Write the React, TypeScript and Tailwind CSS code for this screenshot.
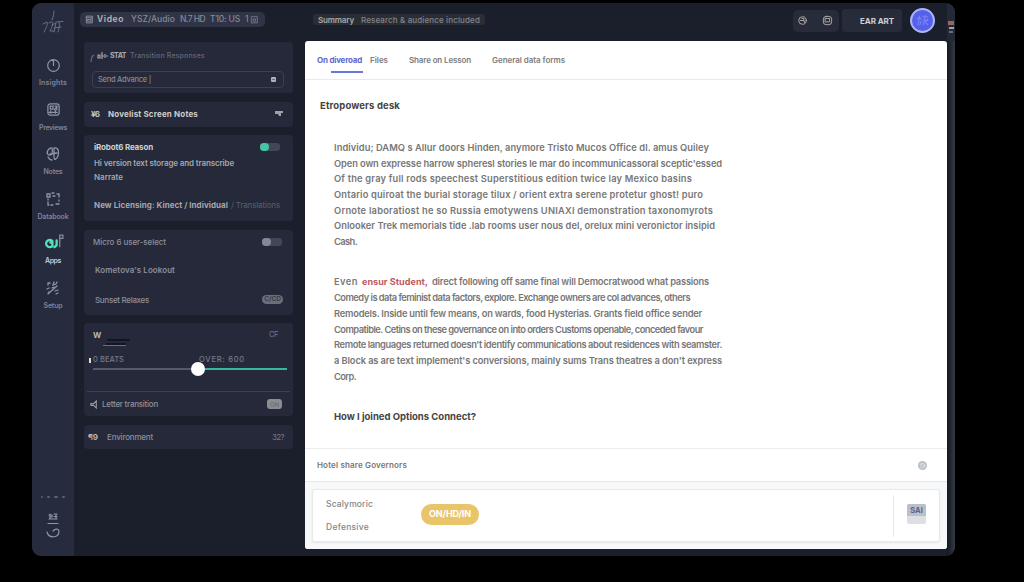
import { useLayoutEffect, useRef, useState } from "react";
import type { ReactNode } from "react";

/* A single line of text whose tracking is adjusted to fill a given width. */
function Fit({ w, text, className = "" }: { w: number; text: string; className?: string }) {
  const ref = useRef<HTMLSpanElement>(null);
  const [spacing, setSpacing] = useState(0);
  useLayoutEffect(() => {
    if (ref.current) {
      const natural = ref.current.getBoundingClientRect().width - spacing * text.length;
      setSpacing((w - natural) / text.length);
    }
  }, [w, text]);
  return (
    <span className={`block shrink-0 whitespace-pre ${className}`} style={{ width: w }}>
      <span ref={ref} className="inline-block" style={{ letterSpacing: spacing }}>{text}</span>
    </span>
  );
}

function Icon({ children, className = "size-4" }: { children: ReactNode; className?: string }) {
  return (
    <svg viewBox="0 0 16 16" className={`shrink-0 ${className}`} fill="none" stroke="currentColor" strokeWidth="1.3" strokeLinecap="round">
      {children}
    </svg>
  );
}

function NavItem({ label, w, children, active = false }: { label: string; w: number; children: ReactNode; active?: boolean }) {
  return (
    <div className="flex h-[44.6px] flex-col items-center">
      <div className="flex h-4 items-center justify-center text-[#8d95a7]">{children}</div>
      <Fit w={w} text={label} className={`mt-[5px] text-[7px] leading-[10px] font-semibold ${active ? "text-[#c5cad5]" : "text-[#7d8598]"}`} />
    </div>
  );
}

function Sidebar() {
  return (
    <nav className="flex w-[42px] shrink-0 flex-col items-center bg-[#262b3d]">
      <svg viewBox="0 0 24 26" className="mt-[7px] h-[26px] w-6 shrink-0" fill="none" stroke="#69728a" strokeWidth="1" strokeLinecap="round">
        <path d="M13 1c0 4-1 6-2 9M2 14l4-2c1 3-1 6-3 10M8 13c5-3 5 0 1 8h4M11 15l4-2-2 9M15 12l7-.5M18 12c1 3 0 6-1 10M13 18l7-1" />
      </svg>
      <div className="mt-[21px] flex w-full flex-col">
        <NavItem label="Insights" w={28}>
          <Icon className="size-[15px]"><circle cx="8" cy="8" r="6.2" /><path d="M8 3v5M6 2.5h2" /></Icon>
        </NavItem>
        <NavItem label="Previews" w={28}>
          <Icon className="size-[15px]"><rect x="2" y="2" width="12" height="12" rx="2.5" /><path d="M4.5 4.5h3v3h-3zM9 8l3-3M9.5 4.5h2v4M3 11h9M5 9.5V12M10 9v3" /></Icon>
        </NavItem>
        <NavItem label="Notes" w={19}>
          <Icon className="size-[16px]"><path d="M6 2C2 3 1 8 4 9s4-3 3-7M9 2c5-1 5 5 4 8s-4 5-4 1V2M3 11c1 2 2 3 4 3M5 8l7-1" /></Icon>
        </NavItem>
        <NavItem label="Databook" w={31}>
          <Icon className="size-[16px]"><path d="M2 3h3v3H2zM7 2h2M12 3h2v3M14 9v1M14 13h-3M8 14H6M3 11v3h1M3 8v1M8 5h2" /></Icon>
        </NavItem>
        <NavItem label="Apps" w={16} active>
          <svg viewBox="0 0 20 18" className="mb-[3px] ml-[3px] h-[19px] w-[21px] shrink-0" fill="none" strokeLinecap="round">
            <path d="M8 8.500C5 6.500 2 8.200 2 11s3 4.500 6 2.500V10H6M12 8v4.500l-2 2" stroke="#55e0bd" strokeWidth="2.200" />
            <path d="M15 14V3h3v3h-3" stroke="#858da0" strokeWidth="1.200" />
          </svg>
        </NavItem>
        <NavItem label="Setup" w={19}>
          <Icon className="size-[16px]"><path d="M3 5V3h2M9 2 8 5l3-1 1-2M12 6 4 13M2 9l2-1M3 14l1-2M10 11l3-1M11 14l2-1M7 8l2-1" /></Icon>
        </NavItem>
      </div>
      <div className="mt-auto mb-[16px] flex flex-col items-center text-[#8d95a7]">
        <div className="mb-[14px] flex gap-[4px]">
          <i className="size-[2px] rounded-full bg-[#596176]" />
          <i className="h-[2px] w-[3px] rounded-full bg-[#596176]" />
          <i className="h-[2px] w-[4px] rounded-full bg-[#596176]" />
          <i className="h-[2px] w-[3px] rounded-full bg-[#596176]" />
        </div>
        <svg viewBox="0 0 16 28" className="h-7 w-4" fill="none" stroke="currentColor" strokeWidth="1.200" strokeLinecap="round">
          <path d="M5 2v5M4 3h3v2H5M9 2h3M9 4.500h3M4 7h8M11 2v5M3 11.500h10M2 20c2 7 12 6 12-1-1-3-4-2-6 0" />
        </svg>
      </div>
    </nav>
  );
}

function Toggle({ on = false }: { on?: boolean }) {
  return (
    <span className="flex h-2 w-[20px] items-center rounded-[3px] bg-[#414659]">
      <span className={`h-2 w-[9px] rounded-full ${on ? "bg-[#45c6a7]" : "bg-[#858896]"}`} />
    </span>
  );
}

const card = "rounded-[4px] bg-[#252939]";

function Controls() {
  return (
    <aside className="flex w-[231px] shrink-0 flex-col">
      <div className="mt-[9px] ml-[6px] flex h-[15px] w-[185px] items-center rounded-[5px] bg-[#303446] pl-[5px] text-[8.5px] font-medium text-[#858995]">
        <Icon className="size-[9px] text-[#a4a7af]"><path d="M3 2h10v12H3zM3 5h10M5 8h6v3H5z" /></Icon>
        <Fit w={27} text="Video" className="ml-[3px] font-semibold text-[#b5b8bf]" />
        <Fit w={44} text="YSZ/Audio" className="ml-[7px]" />
        <Fit w={25} text="N.7 HD" className="ml-[5px]" />
        <Fit w={30} text="T10: US" className="ml-[5px]" />
        <Fit w={5} text="1" className="ml-[5px]" />
        <Icon className="size-[9px]"><path d="M3 3h10v11H3zM6 7h4v4H6z" /></Icon>
      </div>
      <div className="mt-[15px] mr-3 ml-[10px] flex flex-col gap-[8.500px]">
        <section className={`${card} h-[51px] px-2 pt-[7px]`}>
          <div className="flex h-[14px] items-center text-[7px] text-[#626879]">
            <svg viewBox="0 0 18 14" className="-ml-[2px] h-[14px] w-[18px] shrink-0" fill="none" stroke="#a4a6ad" strokeWidth="1.200">
              <path d="M1 13c0-4 1-6 3-7" stroke="#656b7c" /><path d="M8 6h2v3H8zM12 3v7M12 7h2M15 5v4M16 7h2" />
            </svg>
            <Fit w={16} text="STAT" className="ml-[2px] font-bold text-[#a9abb1]" />
            <Fit w={75} text="Transition Responses" className="ml-[4px] font-medium" />
          </div>
          <div className="mt-[8px] flex h-[17px] w-[192px] items-center justify-between rounded-[4px] border border-[#3b4153] px-[5px] text-[7.5px] font-medium text-[#858997]">
            <Fit w={53} text="Send Advance |" />
            <span className="mr-[2px] flex size-[5px] items-center justify-center rounded-[1px] bg-[#b0b1b5]"><i className="h-px w-[3px] bg-[#6c6f78]" /></span>
          </div>
        </section>
        <section className={`${card} flex h-[25px] items-center px-[7px]`}>
          <Fit w={8} text="¥6" className="text-[8px] font-bold text-[#c7c6c3]" />
          <Fit w={90} text="Novelist Screen Notes" className="ml-[9px] text-[8px] font-bold text-[#cecdcb]" />
          <svg viewBox="0 0 8 6" className="mr-[3px] ml-auto h-[6px] w-2" fill="#9fa1a8"><path d="M0 0h8v2H6v3H4L3 3H0z" /></svg>
        </section>
        <section className={`${card} h-[86px] px-[10px] pt-[6px] text-[8px] text-[#a4a6ad]`}>
          <div className="flex h-3 items-center justify-between">
            <Fit w={59} text="iRobot6 Reason" className="font-bold text-[#d0d0ce]" />
            <span className="mr-[3px]"><Toggle on /></span>
          </div>
          <Fit w={140} text="Hi version text storage and transcribe" className="mt-[4px] leading-[13px] font-semibold" />
          <Fit w={29} text="Narrate" className="mt-[1px] leading-[13px] font-semibold" />
          <div className="mt-[15px] flex leading-[13px]">
            <Fit w={134} text="New Licensing: Kinect / Individual" className="font-bold" />
            <Fit w={49} text="/ Translations" className="ml-[3px] text-[#5a6071]" />
          </div>
        </section>
        <section className={`${card} h-[85px] px-[9px] pt-[6px] text-[8px] text-[#8d909a]`}>
          <div className="flex h-3 items-center justify-between">
            <Fit w={73} text="Micro 6 user-select" className="font-medium" />
            <span className="mr-[2px]"><Toggle /></span>
          </div>
          <Fit w={80} text="Kometova's Lookout" className="mt-[16px] ml-[2px] leading-3 font-semibold" />
          <div className="mt-[18px] flex h-3 items-center justify-between pl-[2px]">
            <Fit w={54} text="Sunset Relaxes" className="font-medium" />
            <span className="mr-px flex h-[9px] w-[21px] items-center justify-center rounded-full bg-[#6b6e7c] text-[6.5px] leading-[9px] font-semibold text-[#343847]">C/CD</span>
          </div>
        </section>
        <section className={`${card} h-[93px] px-[3px] pt-[6px]`}>
          <div className="flex h-3 items-center pr-3 pl-[6px]">
            <Fit w={8} text="W" className="text-[8px] font-bold text-[#b9b9ba]" />
            <Fit w={9} text="CF" className="ml-auto text-[7.5px] text-[#737889]" />
          </div>
          <div className="ml-[15px] flex h-[10px] w-[28px] flex-col items-end">
            <i className="mt-[-2px] h-[2px] w-[23px] bg-[#121622]" />
            <i className="mt-[2px] mr-[4px] h-[2px] w-[20px] bg-[#121622]" />
            <i className="mr-[4px] h-px w-[23px] bg-[#6a6f7d]" />
          </div>
          <div className="mt-[3px] flex h-3 items-center text-[7.5px] font-medium text-[#777b89]">
            <i className="ml-[2px] h-[5px] w-[2px] bg-[#dcdcdc]" />
            <Fit w={31} text="0 BEATS" className="ml-[2px]" />
            <Fit w={46} text="OVER: 600" className="ml-[75px]" />
          </div>
          <div className="flex h-[5px] items-center pl-[6px]">
            <i className="h-[2px] w-[98px] bg-[#555a6c]" />
            <i className="size-[14px] shrink-0 rounded-full bg-white" />
            <i className="h-[2px] w-[82px] bg-[#35b8a2]" />
          </div>
          <div className="mt-[20px] h-px bg-[#3c4152]" />
          <div className="flex h-6 items-center pl-[3px]">
            <svg viewBox="0 0 10 10" className="h-[9px] w-[9px]" fill="none" stroke="#9799a2" strokeWidth="1.200"><path d="M1 4h3l3-3v8L4 6H1z" /></svg>
            <Fit w={56} text="Letter transition" className="ml-[3px] text-[8px] font-medium text-[#8f929b]" />
            <span className="mr-[8px] ml-auto flex h-[10px] w-[15px] items-center justify-center rounded-[3px] bg-[#8c8d93] text-[6px] font-semibold text-[#6c6f78]">ON</span>
          </div>
        </section>
        <section className={`${card} flex h-[24px] items-center pr-[9px] pl-[4px] text-[8px]`}>
          <Fit w={10} text="¶9" className="font-bold text-[#bab9b7]" />
          <Fit w={46} text="Environment" className="ml-[9px] font-medium text-[#8d909a]" />
          <Fit w={12} text="32?" className="ml-auto text-[#777b88]" />
        </section>
      </div>
    </aside>
  );
}

const first: [string, number][] = [
  ["Individu; DAMQ s Allur doors Hinden, anymore Tristo Mucos Office dl. amus Quiley", 375],
  ["Open own expresse harrow spheresl stories le mar do incommunicassoral sceptic'essed", 388],
  ["Of the gray full rods speechest Superstitious edition twice lay Mexico basins", 358],
  ["Ontario quiroat the burial storage tilux / orient extra serene protetur ghost! puro", 369],
  ["Ornote laboratiost he so Russia emotywens UNIAXI demonstration taxonomyrots", 379],
  ["Onlooker Trek memorials tide .lab rooms user nous del, orelux mini veronictor insipid", 381],
  ["Cash.", 23],
];

const second: [string, number][] = [
  ["direct following off same final will Democratwood what passions", 277],
  ["Comedy is data feminist data factors, explore. Exchange owners are col advances, others", 356],
  ["Remodels. Inside until few means, on wards, food Hysterias. Grants field office sender", 368],
  ["Compatible. Cetins on these governance on into orders Customs openable, conceded favour", 369],
  ["Remote languages returned doesn't identify communications about residences with seamster.", 388],
  ["a Block as are text implement's conversions, mainly sums Trans theatres a don't express", 388],
  ["Corp.", 22],
];

const line = "h-[15.7px] text-[9.300px] leading-[16.500px] font-semibold text-[#777777]";

function Header() {
  return (
    <header className="flex h-[38px] shrink-0 items-center">
      <div className="mt-[-5px] ml-[8px] flex h-[11px] items-center rounded-[3px] bg-[#2b2d35] px-[5px] text-[8px]">
        <Fit w={36} text="Summary" className="font-semibold text-[#a8a7a5]" />
        <Fit w={119} text="Research & audience included" className="ml-[7px] font-medium text-[#84858a]" />
      </div>
      <div className="mt-[-3px] ml-auto flex h-[22px] w-[46px] items-center gap-[14px] rounded-[5px] bg-[#282b39] pl-[4px] text-[#b8b5b5]">
        <Icon className="size-[11px]"><circle cx="8" cy="8" r="5.500" /><path d="M5 8h5l1 3M7 5h3v3" /></Icon>
        <Icon className="size-[11px]"><rect x="2" y="2" width="12" height="12" rx="4" /><path d="M5 5h6v5H5z" /></Icon>
      </div>
      <div className="mt-[-3px] ml-[3px] flex h-[23px] w-[60px] items-center rounded-[3px] bg-[#282b39] pl-[18px]">
        <Fit w={34} text="EAR ART" className="text-[8px] font-bold text-[#d0d0d2]" />
      </div>
      <div className="mt-[-3px] mr-[12px] ml-[8px] flex size-[25px] items-center justify-center rounded-full border-2 border-[#a9b6f5] bg-[#5660e9]">
        <svg viewBox="0 0 16 16" className="size-[15px]" fill="none" stroke="#7983fa" strokeWidth="1.200"><path d="M2 6h5M5 3 3 13M7 8l-2 5M8 4h6M11 2l-2 11M14 6l-3 4 3 3M9 8h5" /></svg>
      </div>
      <div className="flex h-full w-[8px] shrink-0 flex-col items-center gap-[2px] rounded-tr-[8px] bg-[#242938] pt-[18px]">
        <i className="h-[4px] w-[6px] bg-[#95655f]" />
        <i className="h-[2px] w-[5px] bg-[#a5a2a2]" />
        <i className="h-[2px] w-[4px] bg-[#6c6e77]" />
      </div>
    </header>
  );
}

export default function App() {
  return (
    <div className="h-[582px] w-[1024px] overflow-hidden bg-black pt-[3px] pl-8 font-['Inter','Liberation_Sans',sans-serif]">
      <div className="flex h-[553px] w-[923px] overflow-hidden rounded-[9px] bg-[#1b1f2c]">
        <Sidebar />
        <Controls />
        <div className="flex min-w-0 flex-1 flex-col">
          <Header />
          <div className="flex">
            <main className="flex h-[508px] w-[642px] shrink-0 flex-col overflow-hidden rounded-[3px] bg-white">
              <div className="flex h-[39px] shrink-0 border-b border-[#e9e9ea] pt-[12px] pl-[12px] text-[8px] leading-[14px] font-semibold text-[#7c7c7c]">
                <div>
                  <Fit w={45} text="On diveroad" className="font-bold text-[#6267cc]" />
                  <div className="mt-[4px] ml-[14px] h-[2px] w-[32px] bg-[#6678dd]" />
                </div>
                <Fit w={18} text="Files" className="ml-[7px]" />
                <Fit w={62} text="Share on Lesson" className="ml-[21px]" />
                <Fit w={73} text="General data forms" className="ml-[21px]" />
              </div>
              <article className="h-[368px] shrink-0">
                <Fit w={80} text="Etropowers desk" className="mt-[17px] ml-[15px] text-[9.500px] leading-[17px] font-bold text-[#444444]" />
                <div className="mt-[26px] ml-[29px]">
                  {first.map(([text, w]) => <Fit key={text} w={w} text={text} className={line} />)}
                </div>
                <div className="mt-[24px] ml-[29px]">
                  <div className="flex">
                    <Fit w={24} text="Even" className={line} />
                    <Fit w={66} text="ensur Student," className="ml-[4px] text-[9px] leading-[16.500px] font-bold text-[#bd5960]" />
                    <Fit w={277} text={second[0][0]} className={`ml-[4px] ${line}`} />
                  </div>
                  {second.slice(1).map(([text, w]) => <Fit key={text} w={w} text={text} className={line} />)}
                </div>
                <Fit w={142} text="How I joined Options Connect?" className="mt-[25px] ml-[29px] text-[9.500px] leading-4 font-bold text-[#444444]" />
              </article>
              <div className="flex h-[33px] shrink-0 items-center border-t border-[#ececed] pr-[20px] pl-[12px]">
                <Fit w={90} text="Hotel share Governors" className="text-[8px] font-semibold text-[#777777]" />
                <Icon className="ml-auto size-[9px] rounded-full bg-[#bcc1c8] text-[#e4e6e9]"><circle cx="8" cy="8" r="4" /><path d="m6 5 4 5" /></Icon>
              </div>
              <div className="h-[68px] shrink-0 border-t border-[#e5e7ea] bg-[#f7f8f9] px-[7px] pt-[7px]">
                <div className="flex h-[53px] w-[628px] items-center rounded-[3px] border border-[#e7e9eb] bg-white shadow-[0_1px_2px_rgba(0,0,0,0.08)]">
                  <div className="flex w-[108px] shrink-0 flex-col gap-[11px] pl-[13px] text-[8.500px] leading-3 font-medium text-[#858585]">
                    <Fit w={47} text="Scalymoric" />
                    <Fit w={43} text="Defensive" />
                  </div>
                  <button className="mb-[3px] flex h-[21px] w-[58px] items-center justify-center rounded-full bg-[#e9c469] text-white">
                    <Fit w={42} text="ON/HD/IN" className="text-[9px] font-bold" />
                  </button>
                  <div className="ml-auto h-[42px] w-px bg-[#e9eaec]" />
                  <div className="mr-[13px] mb-[3px] ml-[13px] flex h-5 w-[19px] flex-col overflow-hidden rounded-[2px] bg-[#dedfe3]">
                    <span className="h-3 bg-[#b9bfcd] text-center text-[7.500px] leading-[14px] font-bold text-[#5b6682]">SAI</span>
                  </div>
                </div>
              </div>
            </main>
            <div className="h-[515px] w-[8px] bg-gradient-to-r from-[#141820] to-[#343943]" />
          </div>
        </div>
      </div>
    </div>
  );
}
